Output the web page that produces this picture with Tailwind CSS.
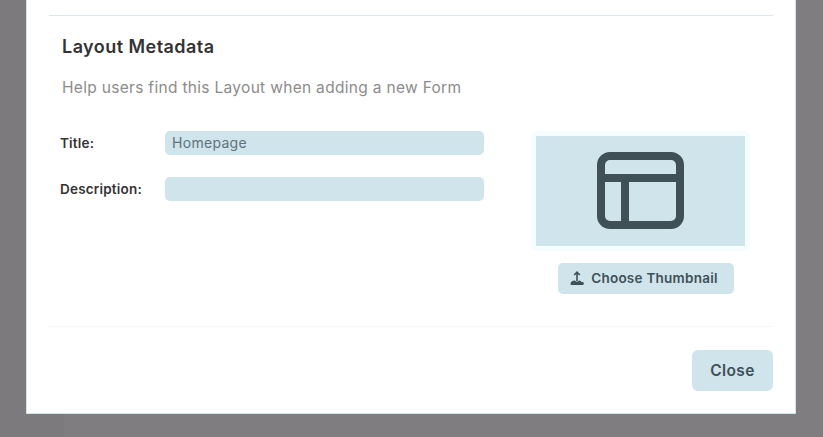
<!DOCTYPE html>
<html lang="en">
<head>
    <meta charset="UTF-8">
    <title>Layout Metadata</title>
    <script src="https://cdn.jsdelivr.net/npm/@tailwindcss/browser@4"></script>
</head>
<body class="bg-[#7f7d7f] font-['Inter',sans-serif]">
    <div class="relative w-[823px] h-[437px] overflow-hidden pl-[26px]">
        <div class="absolute left-0 top-0 w-[64px] h-full bg-[#7c7a7c]"></div>

        <div class="relative w-[770px] h-[414px] bg-white border-x border-b border-[#cfe4eb] pt-[15px] px-[22px]">
            <div class="border-t border-[#dfe6e9]"></div>

            <div class="h-[311px] border-b border-[#f6f7f7] pt-[20px] pl-[13px] pr-[23px]">
                <h2 class="text-[18px] leading-[22px] tracking-[0.45px] font-semibold text-[#333333]">Layout Metadata</h2>
                <p class="mt-[19px] text-[15.5px] leading-[22px] tracking-[0.31px] text-[#8c8c8c]">Help users find this Layout when adding a new Form</p>

                <div class="flex mt-[32px]">
                    <div class="-ml-[2px] w-[424px] flex flex-col gap-[22px]">
                        <div class="flex items-center">
                            <label class="w-[105px] text-[13.5px] tracking-[0.2px] font-semibold text-[#333333]">Title:</label>
                            <div class="w-[319px] h-[24px] rounded-[5px] bg-[#cfe4eb] px-[7px] text-[14px] tracking-[0.3px] leading-[24px] text-[#5f7379]">Homepage</div>
                        </div>
                        <div class="flex items-center">
                            <label class="w-[105px] text-[13.5px] tracking-[0.2px] font-semibold text-[#333333]">Description:</label>
                            <div class="w-[319px] h-[24px] rounded-[5px] bg-[#cfe4eb]"></div>
                        </div>
                    </div>

                    <div class="ml-[47px] w-[219px] flex flex-col">
                        <div class="w-[219px] h-[120px] rounded-[5px] bg-[#f5fdff] p-[5px]">
                            <div class="h-[110px] bg-[#cfe4eb] flex items-start justify-center pt-[16px]">
                                <svg width="87" height="77" viewBox="0 0 87 77" fill="none" stroke="#3f5056" stroke-width="8" class="-ml-[1px]">
                                    <rect x="4" y="4" width="79" height="69" rx="9"/>
                                    <path d="M4 26H83M28 26V73"/>
                                </svg>
                            </div>
                        </div>
                        <button class="mt-[12px] self-end mr-[16px] w-[176px] h-[31px] pr-[4px] rounded-[5px] bg-[#cfe4eb] flex items-center justify-center gap-[7px] text-[13.5px] tracking-[0.25px] font-semibold text-[#3f5056]">
                            <svg width="14" height="15" viewBox="0 0 14 15" fill="none">
                                <path d="M7 1V10M4.2 4L7 1.2L9.8 4" stroke="#3f5056" stroke-width="1.6"/>
                                <path d="M0.5 13C0.5 10.5 3 9.5 5 9.5C5.5 11 8.5 11 9 9.5C10 9.5 11 10 11.3 11H12.5C13.3 11 13.8 11.6 13.8 12.4C13.8 13.3 13.2 14 12.3 14H2C1 14 0.5 13.8 0.5 13Z" fill="#3f5056"/>
                            </svg>
                            Choose Thumbnail
                        </button>
                    </div>
                </div>
            </div>

            <div class="flex justify-end mt-[23px]">
                <button class="w-[81px] h-[41px] rounded-[6px] bg-[#cfe4eb] text-[15.5px] tracking-[0.4px] font-semibold text-[#3f5056]">Close</button>
            </div>
        </div>
    </div>
</body>
</html>
